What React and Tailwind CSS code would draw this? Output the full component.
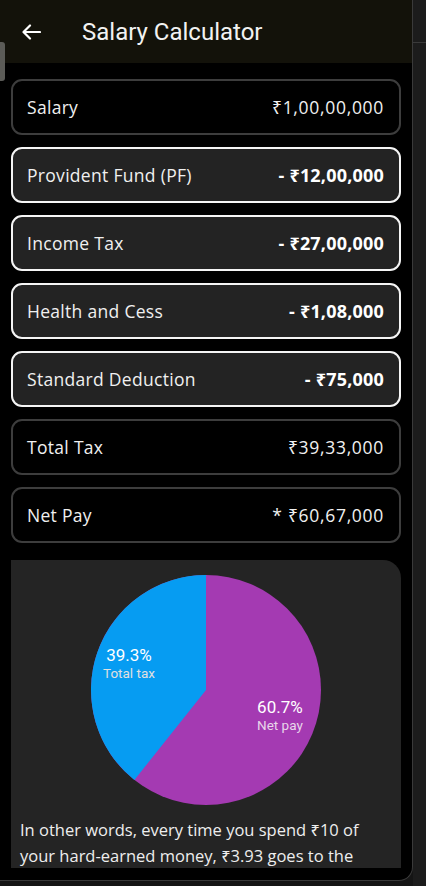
import React from "react";

const rows = [
  { label: "Salary", value: "₹1,00,00,000", hl: false },
  { label: "Provident Fund (PF)", value: "- ₹12,00,000", hl: true },
  { label: "Income Tax", value: "- ₹27,00,000", hl: true },
  { label: "Health and Cess", value: "- ₹1,08,000", hl: true },
  { label: "Standard Deduction", value: "- ₹75,000", hl: true },
  { label: "Total Tax", value: "₹39,33,000", hl: false },
  { label: "Net Pay", value: "* ₹60,67,000", hl: false },
];

function Pie() {
  const cx = 115, cy = 115, r = 115;
  const frac = 0.393;
  const a = frac * 2 * Math.PI;
  const ex = cx - Math.sin(a) * r;
  const ey = cy - Math.cos(a) * r;
  return (
    <svg width="230" height="230" viewBox="0 0 230 230">
      <circle cx={cx} cy={cy} r={r} fill="#a43ab2" />
      <path d={`M${cx} ${cy} L${cx} ${cy - r} A${r} ${r} 0 0 0 ${ex} ${ey} Z`} fill="#069cf2" />
    </svg>
  );
}

export default function App() {
  return (
    <div className="relative flex w-[426px] h-[886px] bg-[#151515] overflow-hidden">
      <div className="w-[413px] h-[881px] bg-black border-r border-b border-[#3a3a3a] rounded-br-[14px] overflow-hidden flex flex-col">
        <div className="h-[63px] shrink-0 bg-[#13120a] flex items-center" style={{ fontFamily: "Roboto, sans-serif" }}>
          <svg className="ml-[22px]" width="19" height="16" viewBox="0 0 19 16" fill="none" stroke="white" strokeWidth="2.2" strokeLinecap="round" strokeLinejoin="round">
            <path d="M18 8H2M8 1.5L1.5 8L8 14.5" />
          </svg>
          <div className="ml-[41px] text-[24px] text-[#f2f2f2] leading-none">Salary Calculator</div>
        </div>
        <div className="flex flex-col gap-[12px] pt-[16px] px-[11px]" style={{ fontFamily: "'Open Sans', 'Noto Sans', sans-serif" }}>
          {rows.map((r) => (
            <div
              key={r.label}
              className={
                r.hl
                  ? "h-[56px] rounded-[11px] border-2 border-[#f5f5f5] bg-[#232323] flex items-center justify-between pl-[14px] pr-[15px]"
                  : "h-[56px] rounded-[11px] border-2 border-[#3d3d3d] bg-black flex items-center justify-between pl-[14px] pr-[15px]"
              }
            >
              <span className="text-[17.5px] text-[#f0f0f0] tracking-[0.3px]">{r.label}</span>
              <span className={r.hl ? "text-[18px] font-bold text-white tracking-[0.2px]" : "text-[17.5px] text-[#f0f0f0] tracking-[0.7px]"}>{r.value}</span>
            </div>
          ))}
        </div>
        <div className="mx-[11px] mt-[17px] bg-[#242424] rounded-tr-[18px] flex flex-col items-center pt-[15px] h-[308px] shrink-0 overflow-hidden">
          <div className="relative w-[230px] h-[230px] shrink-0" style={{ fontFamily: "Roboto, sans-serif" }}>
            <Pie />
            <div className="absolute left-[12px] top-[72px] flex flex-col items-center leading-none">
              <span className="text-[17px] text-white">39.3%</span>
              <span className="text-[13.5px] text-[#e0e0e0] mt-[3px]">Total tax</span>
            </div>
            <div className="absolute left-[166px] top-[124px] flex flex-col items-center leading-none">
              <span className="text-[17px] text-white">60.7%</span>
              <span className="text-[13.5px] text-[#e8d6ea] mt-[3px]">Net pay</span>
            </div>
          </div>
          <p className="self-stretch px-[9px] mt-[12px] text-[16.5px] leading-[26px] text-[#eeeeee] shrink-0" style={{ fontFamily: "'Open Sans', 'Noto Sans', sans-serif" }}>
            In other words, every time you spend ₹10 of your hard-earned money, ₹3.93 goes to the government.
          </p>
        </div>
      </div>
      <div className="flex-1 h-full flex flex-col">
        <div className="h-[43px] border-b border-[#3a3a3a] bg-[#1c1c1c]" />
        <div className="flex-1 bg-[#1c1c1c]" />
      </div>
      <div className="absolute left-0 top-[42px] w-[5px] h-[39px] bg-[#5b5b57] rounded-r-[3px]" />
    </div>
  );
}
